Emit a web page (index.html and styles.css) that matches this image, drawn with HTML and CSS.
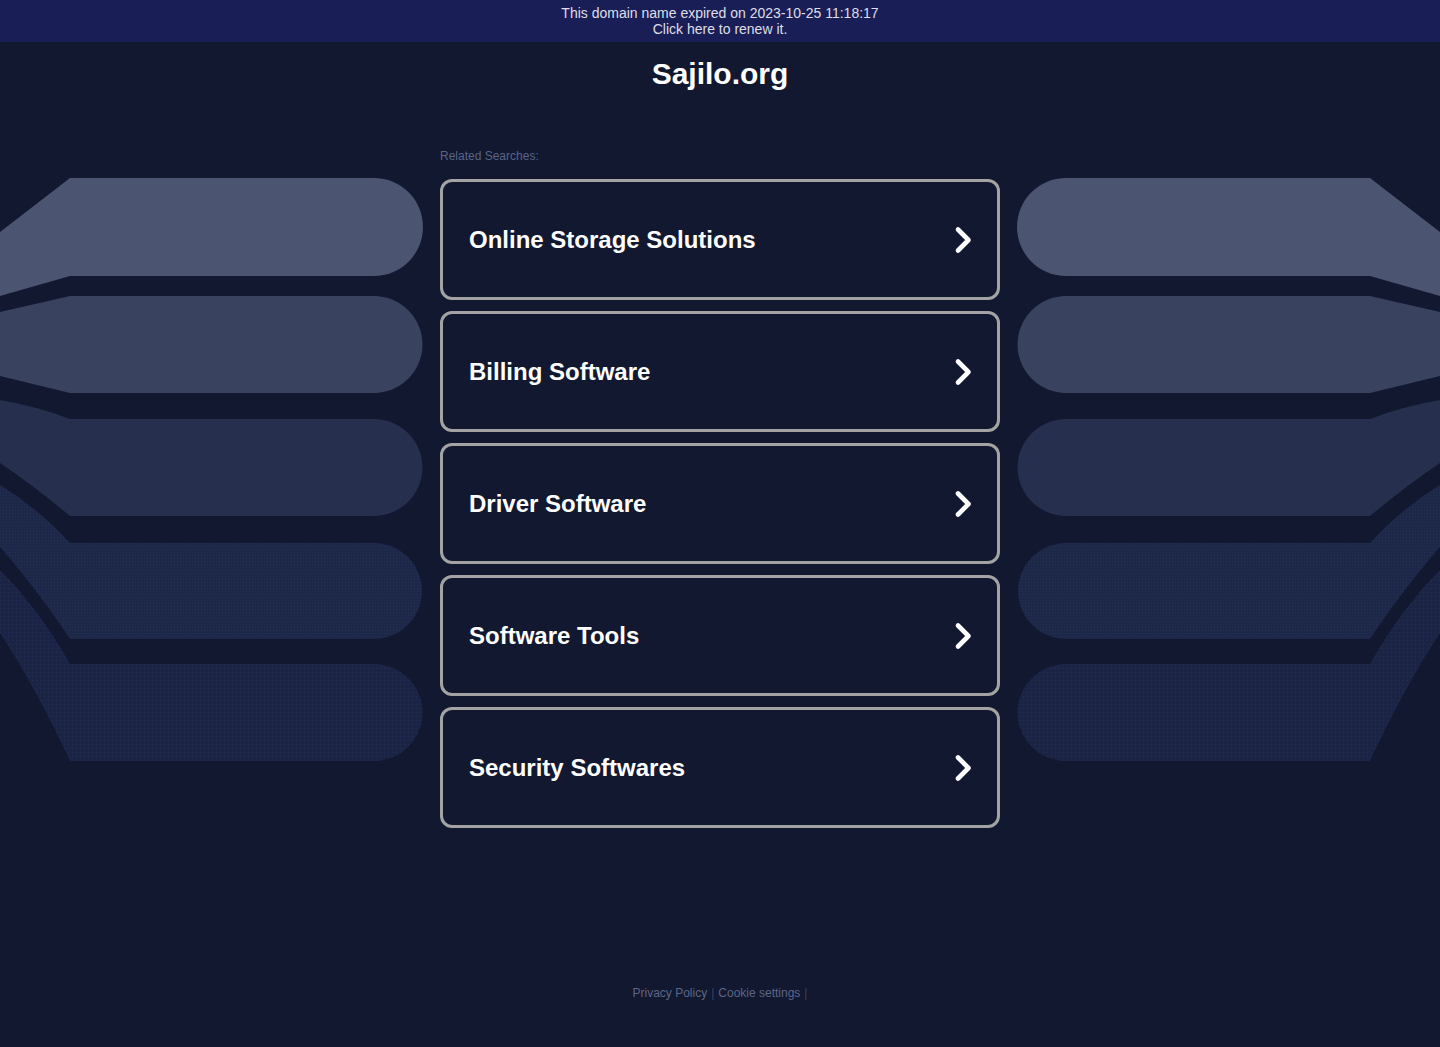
FILE: index.html
```html
<!DOCTYPE html>
<html lang="en">
<head>
<meta charset="utf-8">
<title>Sajilo.org</title>
<link rel="stylesheet" href="styles.css">
</head>
<body>
<div class="backdrop" aria-hidden="true">
  <svg class="art art-left" width="430" height="800" viewBox="0 0 430 800">
    <defs>
      <pattern id="dotsL" width="3" height="3" patternUnits="userSpaceOnUse">
        <rect x="0" y="0" width="1" height="1" fill="#33406a"/>
      </pattern>
      <pattern id="dotsL2" width="4" height="4" patternUnits="userSpaceOnUse">
        <rect x="0" y="0" width="1" height="1" fill="#33406a"/>
      </pattern>
    </defs>
    <path fill="#4b5572" d="M0 232 L70 178 H374 A49 49 0 0 1 374 276 H70 L0 296 Z"/>
    <path fill="#39425f" d="M0 312 L70 296 H374 A48.5 48.5 0 0 1 374 393 H70 L0 376 Z"/>
    <path fill="#262f4e" d="M0 400 Q36 406 70 419 H374 A48.5 48.5 0 0 1 374 516 H70 Q34 486 0 463 Z"/>
    <path fill="#1d2748" d="M0 485 Q38 508 70 543 H374 A48 48 0 0 1 374 639 H70 Q36 588 0 547 Z"/>
    <path fill="url(#dotsL)" opacity="0.35" d="M0 485 Q38 508 70 543 H374 A48 48 0 0 1 374 639 H70 Q36 588 0 547 Z"/>
    <path fill="#1b2445" d="M0 570 Q40 610 70 664 H374 A48.5 48.5 0 0 1 374 761 H70 Q36 688 0 633 Z"/>
    <path fill="url(#dotsL2)" opacity="0.4" d="M0 570 Q40 610 70 664 H374 A48.5 48.5 0 0 1 374 761 H70 Q36 688 0 633 Z"/>
  </svg>
  <svg class="art art-right" width="430" height="800" viewBox="0 0 430 800">
    <defs>
      <pattern id="dotsR" width="3" height="3" patternUnits="userSpaceOnUse">
        <rect x="0" y="0" width="1" height="1" fill="#33406a"/>
      </pattern>
      <pattern id="dotsR2" width="4" height="4" patternUnits="userSpaceOnUse">
        <rect x="0" y="0" width="1" height="1" fill="#33406a"/>
      </pattern>
    </defs>
    <path fill="#4b5572" d="M0 232 L70 178 H374 A49 49 0 0 1 374 276 H70 L0 296 Z"/>
    <path fill="#39425f" d="M0 312 L70 296 H374 A48.5 48.5 0 0 1 374 393 H70 L0 376 Z"/>
    <path fill="#262f4e" d="M0 400 Q36 406 70 419 H374 A48.5 48.5 0 0 1 374 516 H70 Q34 486 0 463 Z"/>
    <path fill="#1d2748" d="M0 485 Q38 508 70 543 H374 A48 48 0 0 1 374 639 H70 Q36 588 0 547 Z"/>
    <path fill="url(#dotsR)" opacity="0.35" d="M0 485 Q38 508 70 543 H374 A48 48 0 0 1 374 639 H70 Q36 588 0 547 Z"/>
    <path fill="#1b2445" d="M0 570 Q40 610 70 664 H374 A48.5 48.5 0 0 1 374 761 H70 Q36 688 0 633 Z"/>
    <path fill="url(#dotsR2)" opacity="0.4" d="M0 570 Q40 610 70 664 H374 A48.5 48.5 0 0 1 374 761 H70 Q36 688 0 633 Z"/>
  </svg>
</div>

<div class="banner">
  <div>This domain name expired on 2023-10-25 11:18:17</div>
  <a class="banner-link" href="#">Click here to renew it.</a>
</div>

<h1 class="title">Sajilo.org</h1>

<main class="content">
  <div class="related">Related Searches:</div>
  <div class="cards">
    <a class="card" href="#"><span class="card-label">Online Storage Solutions</span>
      <svg class="chev" width="20" height="30" viewBox="0 0 20 30"><path d="M5 4.5 L15.5 15 L5 25.5" fill="none" stroke="#fff" stroke-width="4.6" stroke-linecap="round" stroke-linejoin="round"/></svg></a>
    <a class="card" href="#"><span class="card-label">Billing Software</span>
      <svg class="chev" width="20" height="30" viewBox="0 0 20 30"><path d="M5 4.5 L15.5 15 L5 25.5" fill="none" stroke="#fff" stroke-width="4.6" stroke-linecap="round" stroke-linejoin="round"/></svg></a>
    <a class="card" href="#"><span class="card-label">Driver Software</span>
      <svg class="chev" width="20" height="30" viewBox="0 0 20 30"><path d="M5 4.5 L15.5 15 L5 25.5" fill="none" stroke="#fff" stroke-width="4.6" stroke-linecap="round" stroke-linejoin="round"/></svg></a>
    <a class="card" href="#"><span class="card-label">Software Tools</span>
      <svg class="chev" width="20" height="30" viewBox="0 0 20 30"><path d="M5 4.5 L15.5 15 L5 25.5" fill="none" stroke="#fff" stroke-width="4.6" stroke-linecap="round" stroke-linejoin="round"/></svg></a>
    <a class="card" href="#"><span class="card-label">Security Softwares</span>
      <svg class="chev" width="20" height="30" viewBox="0 0 20 30"><path d="M5 4.5 L15.5 15 L5 25.5" fill="none" stroke="#fff" stroke-width="4.6" stroke-linecap="round" stroke-linejoin="round"/></svg></a>
  </div>
</main>

<footer class="footer">
  <a href="#">Privacy Policy</a><span class="sep">|</span><a href="#">Cookie settings</a><span class="sep">|</span>
</footer>
</body>
</html>
```
FILE: styles.css
```css
html, body {
  margin: 0;
  padding: 0;
}
body {
  background: #111830;
  font-family: "Liberation Sans", Arial, sans-serif;
  color: #fff;
  min-height: 1047px;
  position: relative;
  overflow: hidden;
}
a { text-decoration: none; color: inherit; }

.backdrop {
  position: absolute;
  inset: 0;
  z-index: 0;
  pointer-events: none;
}
.art {
  position: absolute;
  top: 0;
  display: block;
}
.art-left { left: 0; }
.art-right { right: 0; transform: scaleX(-1); }

.banner {
  position: relative;
  z-index: 1;
  height: 42px;
  box-sizing: border-box;
  padding-top: 5px;
  background: #1a1e56;
  color: #dedee8;
  font-size: 14px;
  line-height: 16px;
  text-align: center;
}
.banner-link { display: inline-block; }

.title {
  position: relative;
  z-index: 1;
  margin: 14px 0 0;
  font-size: 30px;
  line-height: 36px;
  font-weight: bold;
  text-align: center;
  color: #fff;
}

.content {
  position: relative;
  z-index: 1;
  width: 560px;
  margin: 57px auto 0;
}
.related {
  font-size: 12px;
  line-height: 14px;
  color: #5a6586;
  margin-bottom: 16px;
}
.cards {
  display: flex;
  flex-direction: column;
  gap: 11px;
}
.card {
  display: flex;
  align-items: center;
  justify-content: space-between;
  height: 121px;
  box-sizing: border-box;
  border: 3px solid #a3a3a3;
  border-radius: 12px;
  padding: 0 24px 0 26px;
  background: #111830;
}
.card-label {
  font-size: 24px;
  font-weight: bold;
  color: #fff;
  line-height: 28px;
}
.chev { display: block; }

.footer {
  position: relative;
  z-index: 1;
  margin-top: 158px;
  text-align: center;
  font-size: 12px;
  line-height: 14px;
  color: #5d6686;
}
.footer .sep {
  color: #3a4260;
  margin: 0 4px;
}
.footer .sep:last-child { margin-right: 0; }
```
